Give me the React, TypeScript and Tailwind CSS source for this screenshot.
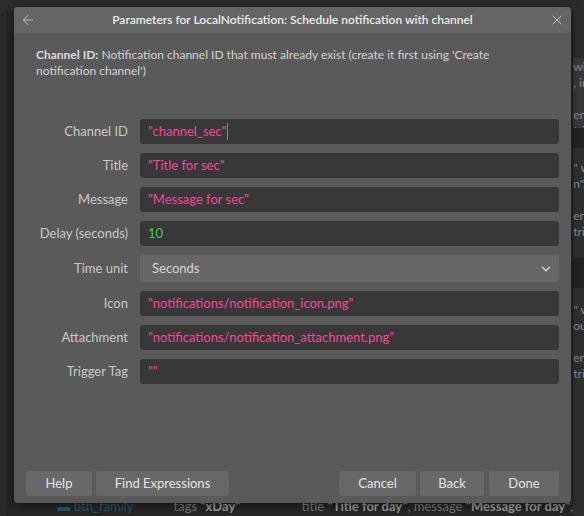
import { ArrowLeft, X, ChevronDown } from 'lucide-react';

const font = { fontFamily: 'Lato, "Noto Sans", sans-serif' };

interface Field {
  label: string;
  value: string;
  kind: 'string' | 'number' | 'select';
  caret?: boolean;
}

const fields: Field[] = [
  { label: 'Channel ID', value: '"channel_sec"', kind: 'string', caret: true },
  { label: 'Title', value: '"Title for sec"', kind: 'string' },
  { label: 'Message', value: '"Message for sec"', kind: 'string' },
  { label: 'Delay (seconds)', value: '10', kind: 'number' },
  { label: 'Time unit', value: 'Seconds', kind: 'select' },
  { label: 'Icon', value: '"notifications/notification_icon.png"', kind: 'string' },
  { label: 'Attachment', value: '"notifications/notification_attachment.png"', kind: 'string' },
  { label: 'Trigger Tag', value: '""', kind: 'string' },
];

const FieldRow = ({ field }: { field: Field }) => {
  return (
    <div className="flex items-center gap-[12px]">
      <div className="w-[102px] text-right text-[13px] text-[#c9c9c9] whitespace-nowrap">{field.label}</div>
      {field.kind === 'select' ? (
        <div className="flex-1 h-[27px] rounded-[3px] bg-[#676767] flex items-center justify-between pl-[12px] pr-[6px] text-[13px] text-[#d4d4d4]">
          <span>{field.value}</span>
          <ChevronDown className="w-[14px] h-[14px] text-[#d0d0d0]" strokeWidth={2.5} />
        </div>
      ) : (
        <div
          className={
            'flex-1 h-[25px] rounded-[3px] bg-[#383838] flex items-center px-[8px] text-[13px] ' +
            (field.kind === 'number' ? 'text-[#3ec85c]' : 'text-[#f0489b]')
          }
        >
          <span>{field.value}</span>
          {field.caret && <span className="w-px h-[17px] bg-[#f0489b] ml-[1px]" />}
        </div>
      )}
    </div>
  );
};

const DialogButton = ({ children, className }: { children: React.ReactNode; className?: string }) => (
  <button className={'h-[25px] rounded-[3px] bg-[#686868] text-[13px] text-[#e4e4e4] ' + (className ?? '')}>
    {children}
  </button>
);

// dimmed events sheet behind the modal
const Background = () => (
  <div className="h-[516px] w-[584px] bg-[#262626] flex flex-col overflow-hidden text-[13px]" style={font}>
    <div className="h-[10px] bg-[#2c2c2c] shrink-0" />
    <div className="flex flex-1">
      <div className="w-[9px] bg-[#2a2a2a] border-r border-[#1e1e1e]" />
      <div className="flex-1 flex flex-col">
        <div className="flex-1" />
        <div className="h-[13px] flex items-end text-[#7a7a7a] overflow-hidden">
          <span className="ml-[50px] w-[110px] shrink-0 text-[#1d5d73] whitespace-nowrap">▬ btn_family</span>
          <span className="ml-[6px] w-[125px] shrink-0 whitespace-nowrap">tags <b className="text-[#9a9a9a]">"xDay"</b></span>
          <span className="ml-[3px] whitespace-nowrap">
            title <b className="text-[#9a9a9a]">"Title for day"</b>, message <b className="text-[#9a9a9a]">"Message for day"</b>,
          </span>
        </div>
      </div>
      <div className="w-[13px] flex flex-col text-[#8a8a8a] text-[12px] leading-[16px] bg-[#2b2b2b] overflow-hidden whitespace-nowrap">
        <div className="h-[48px]" />
        <div className="bg-[#393939] h-[70px] pt-[1px]">wi<br />, in<br /><br />en<br />trig</div>
        <div className="h-[20px] bg-[#222]" />
        <div className="bg-[#2f2f2f] h-[110px] pt-[12px]">" w<br />n",<br /><br />en<br />trig</div>
        <div className="h-[30px] bg-[#222]" />
        <div className="bg-[#2f2f2f] flex-1 pt-[14px]">" w<br />our<br /><br />en<br />trig</div>
      </div>
    </div>
  </div>
);

export default function App() {
  return (
    <div className="relative w-[584px] h-[516px] overflow-hidden" style={font}>
      <Background />
      <div className="absolute left-[14px] top-[7px] w-[557px] h-[496px] rounded-[4px] bg-[#5a5a5a] shadow-[0_2px_10px_rgba(0,0,0,0.5)] flex flex-col overflow-hidden">
        {/* Title bar */}
        <div className="h-[26px] bg-[#656565] flex items-center px-[6px] shrink-0">
          <ArrowLeft className="w-[16px] h-[16px] text-[#bdbdbd]" strokeWidth={1.5} />
          <div className="flex-1 text-center text-[12px] font-semibold text-[#ececec] whitespace-nowrap">
            Parameters for LocalNotification: Schedule notification with channel
          </div>
          <X className="w-[16px] h-[16px] text-[#c4c4c4]" strokeWidth={1.5} />
        </div>

        {/* Description */}
        <div className="pl-[22px] pr-[20px] pt-[14px] text-[12px] leading-[16px] text-[#d2d2d2]">
          <b className="text-[#dadada]">Channel ID:</b> Notification channel ID that must already exist (create it first using 'Create
          notification channel')
        </div>

        {/* Fields */}
        <div className="flex flex-col gap-[9px] pl-[12px] pr-[12px] mt-[40px]">
          {fields.map((f) => (
            <FieldRow key={f.label} field={f} />
          ))}
        </div>

        <div className="flex-1" />

        {/* Footer buttons */}
        <div className="flex items-center pl-[12px] pr-[12px] pb-[7px] gap-[4px]">
          <DialogButton className="w-[66px]">Help</DialogButton>
          <DialogButton className="w-[133px]">Find Expressions</DialogButton>
          <div className="flex-1" />
          <DialogButton className="w-[77px]">Cancel</DialogButton>
          <DialogButton className="w-[64px]">Back</DialogButton>
          <DialogButton className="w-[70px] ml-[1px]">Done</DialogButton>
        </div>
      </div>
    </div>
  );
}
